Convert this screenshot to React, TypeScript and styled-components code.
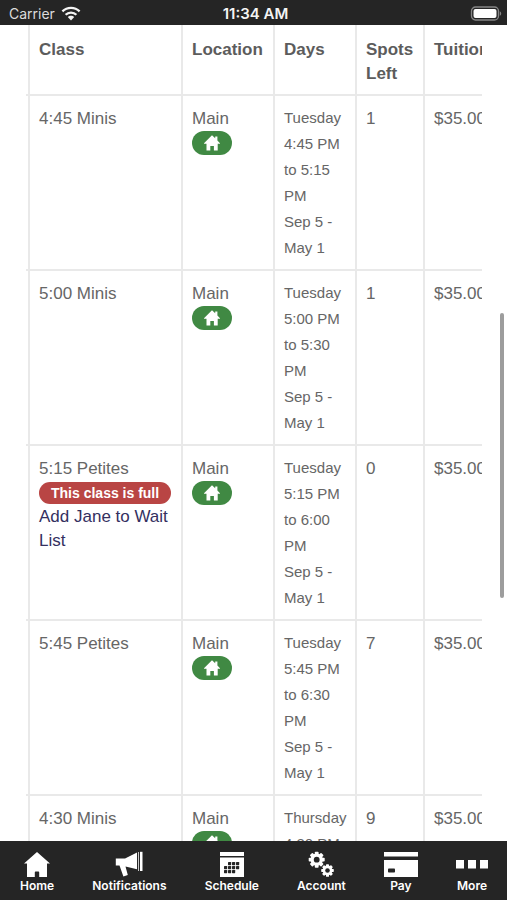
import React from "react";
import styled, { createGlobalStyle } from "styled-components";

const GlobalStyle = createGlobalStyle`
  *, *::before, *::after { box-sizing: border-box; }
  body {
    margin: 0;
    background: #fff;
    font-family: "Liberation Sans", Arial, sans-serif;
    color: #666;
  }
`;

const Screen = styled.div`
  display: flex;
  flex-direction: column;
  height: 100vh;
  overflow: hidden;
`;

const StatusBar = styled.header`
  flex: none;
  display: grid;
  grid-template-columns: 1fr auto 1fr;
  align-items: center;
  height: 25px;
  padding: 2px 5px 0 9px;
  background: #252525;
  color: #f4f4f4;
  font-family: Inter, sans-serif;
  font-size: 14px;
  line-height: 20px;
`;

const Carrier = styled.div`
  display: flex;
  align-items: center;
  gap: 6px;
  color: #dcdcdc;
`;

const Clock = styled.div`
  font-size: 15px;
  font-weight: 600;
`;

const BatterySlot = styled.div`
  display: flex;
  justify-content: flex-end;
`;

const Content = styled.main`
  position: relative;
  flex: 1;
  min-height: 0;
  overflow: hidden;
  padding: 0 25px 0 26px;
`;

const TableClip = styled.div`
  overflow: hidden;
`;

const ClassTable = styled.table`
  width: calc(100% + 24px);
  table-layout: fixed;
  border-collapse: separate;
  border-spacing: 0;
  font-size: 17px;
  line-height: 24px;
`;

const Col = styled.col<{ $width?: number }>`
  width: ${(p) => (p.$width ? `${p.$width}px` : "auto")};
`;

const HeadCell = styled.th`
  height: 69px;
  padding: 13px 0 8px 9px;
  border-left: 2px solid #e9e9e9;
  text-align: left;
  vertical-align: top;
  font-weight: 700;
  color: #5c5c5c;
`;

const Cell = styled.td`
  padding: 11px 9px 7px 9px;
  border-left: 2px solid #e9e9e9;
  border-top: 2px solid #e9e9e9;
  vertical-align: top;
`;

const EdgeCell = styled.td`
  padding: 0;
  border-top: 2px solid #e9e9e9;
`;

const DaysCell = styled(Cell)`
  padding-top: 9px;
  padding-bottom: 8px;
  padding-right: 0;
  font-size: 15px;
  line-height: 26px;
`;

const DayLine = styled.div`
  max-width: 64px;
`;

const Badge = styled.span<{ $tone: "green" | "red" }>`
  display: flex;
  align-items: center;
  justify-content: center;
  width: fit-content;
  height: ${(p) => (p.$tone === "green" ? 24 : 22)}px;
  margin: ${(p) => (p.$tone === "green" ? "0" : "1px 0")};
  padding: 0 12px;
  border-radius: 12px;
  background: ${(p) => (p.$tone === "green" ? "#408943" : "#b94544")};
  color: #fff;
  font-size: 14px;
  line-height: 22px;
  font-weight: 700;
  white-space: nowrap;
`;

const WaitLink = styled.a`
  display: block;
  margin-right: -8px;
  color: #34305f;
  text-decoration: none;
`;

const ScrollThumb = styled.div`
  position: absolute;
  top: 35%;
  right: 3px;
  width: 4px;
  height: 35%;
  margin-top: 2px;
  border-radius: 2px;
  background: #9d9d9d;
`;

const TabBar = styled.nav`
  flex: none;
  display: flex;
  justify-content: space-between;
  height: 59px;
  padding: 10px 19px 0 20px;
  background: #252525;
`;

const Tab = styled.button`
  display: flex;
  flex-direction: column;
  align-items: center;
  gap: 1px;
  padding: 0;
  border: 0;
  background: none;
  color: #fff;
  font-family: Inter, sans-serif;
  font-size: 12px;
  font-weight: 600;
  line-height: 16px;
  cursor: pointer;
`;

const WifiIcon = () => (
  <svg width="20" height="15" viewBox="0 0 20 15" fill="none" stroke="#f4f4f4" strokeWidth="2.3" aria-hidden="true">
    <path d="M1.4 5.4C6.2.6 13.8.6 18.6 5.4" />
    <path d="M4.6 8.8C7.6 5.8 12.4 5.8 15.4 8.8" />
    <path d="M10 14.4 6.8 11.1C8.5 9.4 11.5 9.4 13.2 11.1Z" fill="#f4f4f4" stroke="none" />
  </svg>
);

const BatteryIcon = () => (
  <svg width="32" height="15" viewBox="0 0 32 15" aria-hidden="true">
    <rect x="1.5" y="1" width="27" height="13" rx="4" fill="#252525" stroke="#858585" strokeWidth="1.3" />
    <rect x="3.5" y="3" width="23" height="9" rx="2" fill="#fff" />
    <path d="M29.8 5.2C31.7 6 31.7 9 29.8 9.8Z" fill="#858585" />
  </svg>
);

const BadgeHome = () => (
  <svg width="16" height="16" viewBox="0 0 16 16" fill="#fff" aria-hidden="true">
    <path d="M8 .2 11.2 3.3V1.6H13.4V5.4L16 8.2V8.8H13.7V15.6H9.9V11H6.3V15.6H2.5V8.8H0V8.2Z" />
  </svg>
);

const HomeIcon = () => (
  <svg width="26" height="26" viewBox="0 0 26 26" fill="#fff" aria-hidden="true">
    <path d="M13 1 26 12.6H23V26H15.2V21.4Q15.2 20.6 14.4 20.6H11.6Q10.8 20.6 10.8 21.4V26H3V12.6H0Z" />
  </svg>
);

const MegaphoneIcon = () => (
  <svg width="28" height="26" viewBox="0 0 28 26" fill="#fff" aria-hidden="true">
    <path d="M.8 7.4H10L22 1.6V18.2L10.5 15.6 12.8 24 8.4 25.5 4.5 14.4H.8Z" />
    <path d="M23 1H24V20H23Z" opacity=".75" />
    <path d="M25 .8H27.5V20H25Z" />
  </svg>
);

const CalendarIcon = () => {
  const dots = [
    [9, 11], [13, 11], [17, 11],
    [5, 15], [9, 15], [13, 15], [17, 15],
    [5, 19], [9, 19], [13, 19],
  ];
  return (
    <svg width="26" height="26" viewBox="0 0 26 26" aria-hidden="true">
      <path d="M1 1H25V5H1ZM1 6.5H25V26H1Z" fill="#fff" />
      {dots.map(([x, y]) => (
        <rect key={`${x}-${y}`} x={x} y={y} width="3.2" height="3.2" rx=".6" fill="#252525" />
      ))}
    </svg>
  );
};

const Gear = ({ cx, cy, r }: { cx: number; cy: number; r: number }) => (
  <g transform={`translate(${cx} ${cy}) scale(${r / 8})`}>
    {[0, 45, 90, 135].map((angle) => (
      <rect key={angle} x="-1.9" y="-8" width="3.8" height="16" rx=".8" fill="#fff" transform={`rotate(${angle})`} />
    ))}
    <circle r="6.2" fill="#fff" />
    <circle r="2.9" fill="#252525" />
  </g>
);

const GearsIcon = () => (
  <svg width="26" height="26" viewBox="0 0 26 26" aria-hidden="true">
    <Gear cx={8.7} cy={8.7} r={8} />
    <Gear cx={19.5} cy={19.5} r={6.3} />
  </svg>
);

const CardIcon = () => (
  <svg width="34" height="26" viewBox="0 0 34 26" aria-hidden="true">
    <path d="M0 1H34V5.5H0ZM0 9H34V26H0Z" fill="#fff" />
    <rect x="4" y="17.5" width="7" height="4" rx=".8" fill="#252525" />
  </svg>
);

const MoreIcon = () => (
  <svg width="32" height="26" viewBox="0 0 32 26" fill="#fff" aria-hidden="true">
    <path d="M0 9H8V17.5H0ZM12 9H20V17.5H12ZM24 9H32V17.5H24Z" />
  </svg>
);

interface ClassRow {
  name: string;
  days: string[];
  spots: number;
  full?: boolean;
}

const classes: ClassRow[] = [
  { name: "4:45 Minis", days: ["Tuesday 4:45 PM to 5:15 PM", "Sep 5 - May 1"], spots: 1 },
  { name: "5:00 Minis", days: ["Tuesday 5:00 PM to 5:30 PM", "Sep 5 - May 1"], spots: 1 },
  { name: "5:15 Petites", days: ["Tuesday 5:15 PM to 6:00 PM", "Sep 5 - May 1"], spots: 0, full: true },
  { name: "5:45 Petites", days: ["Tuesday 5:45 PM to 6:30 PM", "Sep 5 - May 1"], spots: 7 },
  { name: "4:30 Minis", days: ["Thursday 4:30 PM"], spots: 9 },
];

const tabs = [
  { label: "Home", icon: <HomeIcon /> },
  { label: "Notifications", icon: <MegaphoneIcon /> },
  { label: "Schedule", icon: <CalendarIcon /> },
  { label: "Account", icon: <GearsIcon /> },
  { label: "Pay", icon: <CardIcon /> },
  { label: "More", icon: <MoreIcon /> },
];

export default function App() {
  return (
    <Screen>
      <GlobalStyle />
      <StatusBar>
        <Carrier>
          Carrier
          <WifiIcon />
        </Carrier>
        <Clock>11:34 AM</Clock>
        <BatterySlot>
          <BatteryIcon />
        </BatterySlot>
      </StatusBar>
      <Content>
        <TableClip>
          <ClassTable>
            <colgroup>
              <Col $width={2} />
              <Col />
              <Col $width={92} />
              <Col $width={82} />
              <Col $width={68} />
              <Col $width={83} />
            </colgroup>
            <thead>
              <tr>
                <td />
                <HeadCell scope="col">Class</HeadCell>
                <HeadCell scope="col">Location</HeadCell>
                <HeadCell scope="col">Days</HeadCell>
                <HeadCell scope="col">Spots Left</HeadCell>
                <HeadCell scope="col">Tuition</HeadCell>
              </tr>
            </thead>
            <tbody>
              {classes.map((row) => (
                <tr key={row.name}>
                  <EdgeCell />
                  <Cell>
                    {row.name}
                    {row.full && (
                      <>
                        <Badge $tone="red">This class is full</Badge>
                        <WaitLink href="#wait-list">Add Jane to Wait List</WaitLink>
                      </>
                    )}
                  </Cell>
                  <Cell>
                    Main
                    <Badge $tone="green">
                      <BadgeHome />
                    </Badge>
                  </Cell>
                  <DaysCell>
                    {row.days.map((line) => (
                      <DayLine key={line}>{line}</DayLine>
                    ))}
                  </DaysCell>
                  <Cell>{row.spots}</Cell>
                  <Cell>$35.00</Cell>
                </tr>
              ))}
            </tbody>
          </ClassTable>
        </TableClip>
        <ScrollThumb />
      </Content>
      <TabBar>
        {tabs.map((tab) => (
          <Tab key={tab.label} type="button">
            {tab.icon}
            {tab.label}
          </Tab>
        ))}
      </TabBar>
    </Screen>
  );
}
